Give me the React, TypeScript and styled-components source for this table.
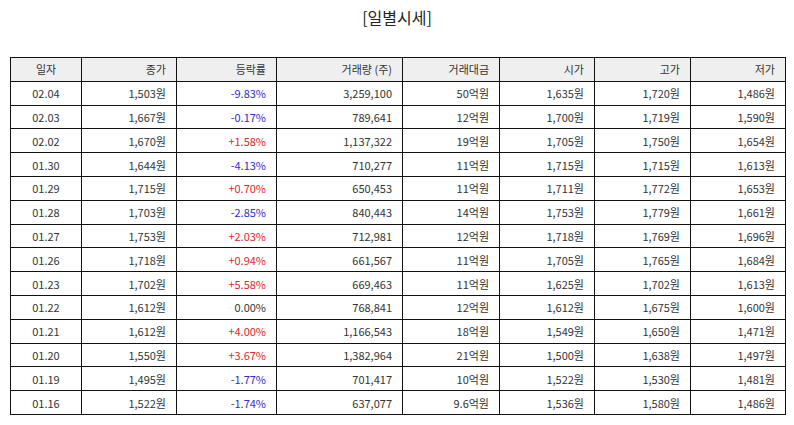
import React from "react";
import styled, { createGlobalStyle } from "styled-components";

const GlobalStyle = createGlobalStyle`
  html, body { margin: 0; padding: 0; background: #ffffff; }
  body { font-family: "Noto Sans CJK KR", "Noto Sans", sans-serif; }
`;

const Page = styled.div`
  width: 794px;
  height: 425px;
  box-sizing: border-box;
  padding-top: 6px;
  background: #ffffff;
`;

const Title = styled.h1`
  margin: 0;
  height: 51px;
  text-align: center;
  font-size: 16px;
  font-weight: 400;
  line-height: 22px;
  color: #222222;
  font-family: "Noto Sans CJK KR", "Noto Sans", sans-serif;
`;

const Table = styled.table`
  margin-left: 10px;
  width: 775px;
  border-collapse: collapse;
  table-layout: fixed;
  font-family: "Noto Sans CJK KR", "Noto Sans", sans-serif;
  font-size: 11px;
  color: #333333;
`;

const Row = styled.tr`
  height: 23.8px;
`;

const Head = styled.th<{ $align: "center" | "right" }>`
  border: 1px solid #111111;
  background: #efefef;
  font-weight: 400;
  text-align: ${(p) => p.$align};
  padding: 0 10px;
  line-height: 14px;
  white-space: nowrap;
`;

const Cell = styled.td<{ $align: "center" | "right"; $tone?: "up" | "down" | "flat" }>`
  border: 1px solid #111111;
  text-align: ${(p) => p.$align};
  padding: 0 10px;
  line-height: 14px;
  white-space: nowrap;
  color: ${(p) =>
    p.$tone === "up" ? "#e0262c" : p.$tone === "down" ? "#2d2dcc" : "#333333"};
`;

const columns: { label: string; width: number; align: "center" | "right" }[] = [
  { label: "일자", width: 71, align: "center" },
  { label: "종가", width: 95, align: "right" },
  { label: "등락률", width: 100, align: "right" },
  { label: "거래량 (주)", width: 126, align: "right" },
  { label: "거래대금", width: 97, align: "right" },
  { label: "시가", width: 95, align: "right" },
  { label: "고가", width: 96, align: "right" },
  { label: "저가", width: 95, align: "right" },
];

const rows: string[][] = [
  ["02.04", "1,503원", "-9.83%", "3,259,100", "50억원", "1,635원", "1,720원", "1,486원"],
  ["02.03", "1,667원", "-0.17%", "789,641", "12억원", "1,700원", "1,719원", "1,590원"],
  ["02.02", "1,670원", "+1.58%", "1,137,322", "19억원", "1,705원", "1,750원", "1,654원"],
  ["01.30", "1,644원", "-4.13%", "710,277", "11억원", "1,715원", "1,715원", "1,613원"],
  ["01.29", "1,715원", "+0.70%", "650,453", "11억원", "1,711원", "1,772원", "1,653원"],
  ["01.28", "1,703원", "-2.85%", "840,443", "14억원", "1,753원", "1,779원", "1,661원"],
  ["01.27", "1,753원", "+2.03%", "712,981", "12억원", "1,718원", "1,769원", "1,696원"],
  ["01.26", "1,718원", "+0.94%", "661,567", "11억원", "1,705원", "1,765원", "1,684원"],
  ["01.23", "1,702원", "+5.58%", "669,463", "11억원", "1,625원", "1,702원", "1,613원"],
  ["01.22", "1,612원", "0.00%", "768,841", "12억원", "1,612원", "1,675원", "1,600원"],
  ["01.21", "1,612원", "+4.00%", "1,166,543", "18억원", "1,549원", "1,650원", "1,471원"],
  ["01.20", "1,550원", "+3.67%", "1,382,964", "21억원", "1,500원", "1,638원", "1,497원"],
  ["01.19", "1,495원", "-1.77%", "701,417", "10억원", "1,522원", "1,530원", "1,481원"],
  ["01.16", "1,522원", "-1.74%", "637,077", "9.6억원", "1,536원", "1,580원", "1,486원"],
];

const toneOf = (v: string): "up" | "down" | "flat" =>
  v.startsWith("+") ? "up" : v.startsWith("-") ? "down" : "flat";

export default function App() {
  return (
    <Page>
      <GlobalStyle />
      <Title>[일별시세]</Title>
      <Table>
        <colgroup>
          {columns.map((c) => (
            <col key={c.label} style={{ width: c.width }} />
          ))}
        </colgroup>
        <thead>
          <Row>
            {columns.map((c) => (
              <Head key={c.label} $align={c.align}>
                {c.label}
              </Head>
            ))}
          </Row>
        </thead>
        <tbody>
          {rows.map((r) => (
            <Row key={r[0]}>
              {r.map((v, i) => (
                <Cell
                  key={i}
                  $align={columns[i].align}
                  $tone={i === 2 ? toneOf(v) : undefined}
                >
                  {v}
                </Cell>
              ))}
            </Row>
          ))}
        </tbody>
      </Table>
    </Page>
  );
}
